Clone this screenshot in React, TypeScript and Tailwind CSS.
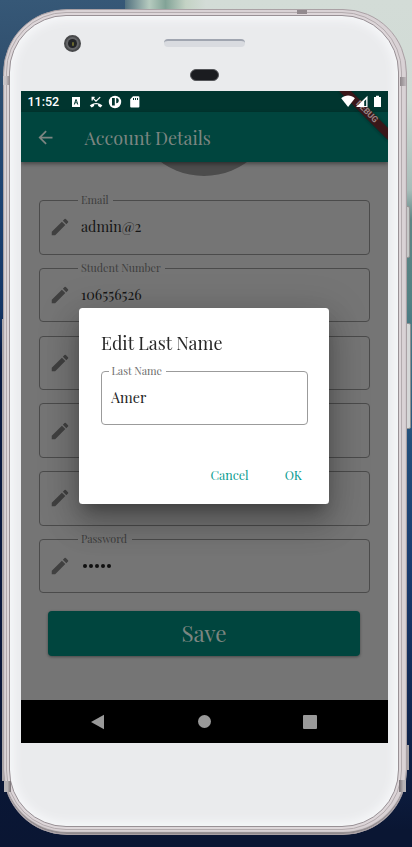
import React from "react";

const serif = "font-['Playfair_Display','Liberation_Serif',serif]";

function Pencil() {
  return (
    <svg viewBox="0 0 24 24" className="ml-[9.5px] h-[22px] w-[22px] shrink-0 fill-[#404040]">
      <path d="M3 17.25V21h3.75L17.81 9.94l-3.75-3.75L3 17.25zM20.71 7.04a1 1 0 0 0 0-1.41l-2.34-2.34a1 1 0 0 0-1.41 0l-1.83 1.83 3.75 3.75 1.83-1.83z" />
    </svg>
  );
}

function Field({ label, value }: { label: string; value?: string }) {
  return (
    <div className="relative flex h-[54.5px] items-center rounded-[4px] border border-[#4b4b4b]">
      <Pencil />
      {label && (
        <span className={`absolute left-[38px] top-[-8px] whitespace-nowrap bg-[#757575] pl-[3.5px] pr-[4.5px] text-[10.75px] leading-[14px] text-[#3d3d3d] ${serif}`}>
          {label}
        </span>
      )}
      {value === "•••••" ? (
        <span className="ml-[11.5px] flex gap-[2.2px]">
          {[0, 1, 2, 3, 4].map((i) => (
            <i key={i} className="h-[4px] w-[4px] rounded-full bg-[#101010]" />
          ))}
        </span>
      ) : (
        <span className={`ml-[10px] text-[14.3px] leading-5 text-[#161616] ${serif}`}>{value}</span>
      )}
    </div>
  );
}

function StatusBar() {
  return (
    <div className="flex h-[21px] shrink-0 items-center bg-[#00352f] pl-[7px] pt-px font-[Roboto,sans-serif] text-white">
      <span className="w-[33px] text-[12.5px] font-medium leading-none">11:52</span>
      <svg viewBox="0 0 72 16" className="ml-[9px] h-[16px] w-[72px]">
        <path fill="#fff" fillRule="evenodd" d="M2 3h8v10H2zM3.8 10.5h1l.4-1.2h1.7l.4 1.2h1L6.6 5.3H5.5zM5.5 8.4l.6-1.8.6 1.8z" />
        <path fill="none" stroke="#fff" strokeWidth="1.3" d="M22.2 6.4V3.3h2.4M22.5 3.6l3.5 3.5 4.2-4" />
        <path fill="#fff" d="M19.8 11.6c3.3-3.6 9.4-3.6 12.6 0l-1.9 2-2.4-1.6v-1.5c-1.4-.4-2.7-.4-4 0V12l-2.4 1.6z" />
        <circle cx="45" cy="8" r="6.2" fill="#fff" />
        <path fill="#00352f" d="M42 4h2.8v7.4H42zM46.2 4c3.5 0 3.5 5.2 0 5.2z" />
        <path fill="#fff" fillRule="evenodd" d="M63 2.3h5.4a1 1 0 0 1 1 1v9.2a1 1 0 0 1-1 1h-7.2a1 1 0 0 1-1-1V5.2zM63 4v2h1V4zM65 4v2h1V4zM67 4v2h1V4z" />
      </svg>
    </div>
  );
}

function SystemIcons() {
  return (
    <svg viewBox="0 0 55 60" className="absolute right-0 top-0 z-20 h-[60px] w-[55px]">
      <defs>
        <filter id="soft"><feGaussianBlur stdDeviation="1.8" /></filter>
      </defs>
      <path d="M6 0h12l37 37v13z" fill="#001f1b" opacity=".6" filter="url(#soft)" />
      <path d="M6 0h12L55 37v12z" fill="#391719" />
      <text transform="translate(22.5 13) rotate(45)" fontFamily="Roboto, sans-serif" fontWeight="700" fontSize="8.6" fill="#9a8585" textLength="27">DEBUG</text>
      <path d="M8.2 7.2c4-3.5 9.7-3.5 13.7 0L15.1 15.9z" fill="#fff" />
      <path d="M23 16L34.5 4.8V16z" fill="#fff" />
      <path d="M31.2 10.2l2-2V15h-2z" fill="#00352f" />
      <path d="M41 6h2V4.8h3V6h2v10h-7z" fill="#fff" />
    </svg>
  );
}

function Dialog() {
  return (
    <div className={`absolute left-[58.5px] top-[217px] z-30 flex h-[196px] w-[249.5px] flex-col rounded-[3.5px] bg-white px-[21.5px] shadow-[0_10px_15px_-6px_rgba(0,0,0,0.3),0_20px_30px_3px_rgba(0,0,0,0.17),0_8px_38px_7px_rgba(0,0,0,0.13)] ${serif}`}>
      <h2 className="mt-[22px] origin-left scale-x-[0.945] whitespace-nowrap text-[19px] leading-6 text-[#282828]">Edit Last Name</h2>
      <div className="relative mt-[17px] flex h-[54px] w-[207px] items-center rounded-[4px] border border-[#9b9b9b] pl-[9.5px] text-[14.3px] text-[#242424]">
        <span className="absolute left-[7px] top-[-8px] whitespace-nowrap bg-white pl-[3px] pr-[4.5px] text-[10.75px] leading-[14px] text-[#6c6c6c]">Last Name</span>
        Amer
      </div>
      <div className="mt-[40px] flex h-5 justify-end pr-[5px] text-[12.5px] leading-5 text-[#0a9c8f]">
        <span>Cancel</span>
        <span className="ml-[36px]">OK</span>
      </div>
    </div>
  );
}

function Screen() {
  return (
    <main className="relative flex h-[652px] w-[367px] flex-col overflow-hidden bg-[#757575]">
      <StatusBar />
      <header className="z-10 flex h-[50px] shrink-0 items-center bg-[#00453e] pl-[14.5px] shadow-[0_2px_4px_rgba(0,0,0,0.4)]">
        <svg viewBox="0 0 24 24" className="h-[21px] w-[21px] fill-[#7c8581]">
          <path d="M20 11H7.83l5.59-5.59L12 4l-8 8 8 8 1.41-1.41L7.83 13H20z" />
        </svg>
        <h1 className={`ml-[28.5px] mt-[2px] whitespace-nowrap text-[18px] leading-6 text-[#7c8581] ${serif}`}>Account Details</h1>
      </header>
      <section className="flex h-[538px] shrink-0 flex-col items-center overflow-hidden">
        <div className="mt-[-132px] h-[146px] w-[146px] shrink-0 rounded-full bg-[#4c4c4c]" />
        <div className="mt-[24px] flex w-[331px] shrink-0 flex-col gap-[13.3px]">
          <Field label="Email" value="admin@2" />
          <Field label="Student Number" value="106556526" />
          <Field label="" />
          <Field label="" />
          <Field label="" />
          <Field label="Password" value="•••••" />
        </div>
        <button className={`mt-[17.5px] h-[45px] w-[312px] shrink-0 rounded-[4px] bg-[#00453e] text-[22.4px] leading-[30px] text-[#7c8581] shadow-[0_1px_3px_rgba(0,0,0,0.4)] ${serif}`}>Save</button>
      </section>
      <nav className="flex h-[43px] shrink-0 items-center bg-black pl-[70px]">
        <svg viewBox="0 0 14 16" className="h-[16px] w-[14px]"><path d="M0 8L13 .8v14.4z" fill="#999" /></svg>
        <i className="ml-[93px] h-[13px] w-[13px] rounded-full bg-[#999]" />
        <i className="ml-[92px] h-[14px] w-[14px] rounded-[1px] bg-[#999]" />
      </nav>
      <SystemIcons />
      <Dialog />
    </main>
  );
}

export default function App() {
  return (
    <div className="relative h-[847px] w-[412px] overflow-hidden bg-[linear-gradient(180deg,#365877_0,#31506f_60px,#1c4272_200px,#143565_310px,#07183f_360px,#09183e_560px,#0a1633_847px)]">
      <div className="absolute right-0 top-0 h-[847px] w-[206px] bg-[linear-gradient(180deg,#d3dcd7_0,#d1dbd5_100px,#a8bdb9_190px,#5f8584_220px,#538183_300px,#396b83_370px,#234f7b_440px,#1a3d71_560px,#102650_720px,#0a1633_830px)]" />
      <div className="absolute left-[125px] top-0 h-[12px] w-[81px] bg-[linear-gradient(90deg,#52717f,#b6cbbf_30%,#82a397_50%,#c4d3c5_75%,#d3dcd7)]" />
      <div className="absolute right-[2px] top-[206px] h-[52px] w-[8px] rounded-[2px] border border-[#939494] bg-[#c6c9c8]" />
      <div className="absolute right-[1px] top-[323px] h-[106px] w-[8px] rounded-[2px] border border-[#8d9193] bg-[#d5d7d7]" />
      <div className="absolute left-[2px] top-[319px] h-[462px] w-[6px] bg-[#aaa5a7]" />
      <div className="absolute right-[3px] top-[745px] h-[25px] w-[6px] bg-[#aaa5a7]" />
      <div className="absolute left-[3px] top-[9px] h-[826px] w-[404px] rounded-[64px] border border-[#aaa1a5] bg-[#d9d2d5] pb-[4px] pl-[2px] pr-[4px] pt-[2px] shadow-[inset_0_-2px_1px_#918b8e]">
        <div className="h-full rounded-[60px] border border-[#b3abae] bg-[#ddd6d9] p-[2px]">
          <div className="flex h-full flex-col items-center rounded-[57px] border border-[#989095] bg-[#eaebed] shadow-[inset_0_0_10px_4px_#f6f7f9]">
            <div className="relative h-[75px] w-full shrink-0">
              <span className="absolute left-[54px] top-[19px] flex h-[17px] w-[17px] items-center justify-center rounded-full border-2 border-[#48494b] bg-[#646568]">
                <i className="flex h-[9px] w-[9px] items-center justify-center rounded-full bg-[#222427]">
                  <i className="h-[4px] w-[2px] rounded-full bg-[#68662f]" />
                </i>
              </span>
              <span className="absolute left-[154px] top-[23px] h-[8px] w-[81px] rounded-full border-t-2 border-[#a0a5b0] bg-[#d9dbe0]" />
              <span className="absolute left-[180px] top-[53px] h-[12px] w-[29px] rounded-full border border-[#55565a] bg-[#1b1c20]" />
            </div>
            <Screen />
          </div>
        </div>
      </div>
      <i className="absolute left-[297px] top-[10px] h-[4px] w-[10px] bg-[#928a8e]" />
      <i className="absolute left-[3px] top-[76px] h-[9px] w-[7px] bg-[linear-gradient(90deg,#c8c2c5_40%,#8d8589)]" />
      <i className="absolute left-[400px] top-[77px] h-[9px] w-[6px] bg-[linear-gradient(90deg,#8d8589,#c0babd)]" />
      <i className="absolute left-[4px] top-[781px] h-[11px] w-[7px] bg-[linear-gradient(90deg,#b7b3b5_50%,#777074)]" />
      <i className="absolute left-[399px] top-[780px] h-[12px] w-[7px] bg-[linear-gradient(90deg,#777074,#b7b3b5_60%)]" />
    </div>
  );
}
